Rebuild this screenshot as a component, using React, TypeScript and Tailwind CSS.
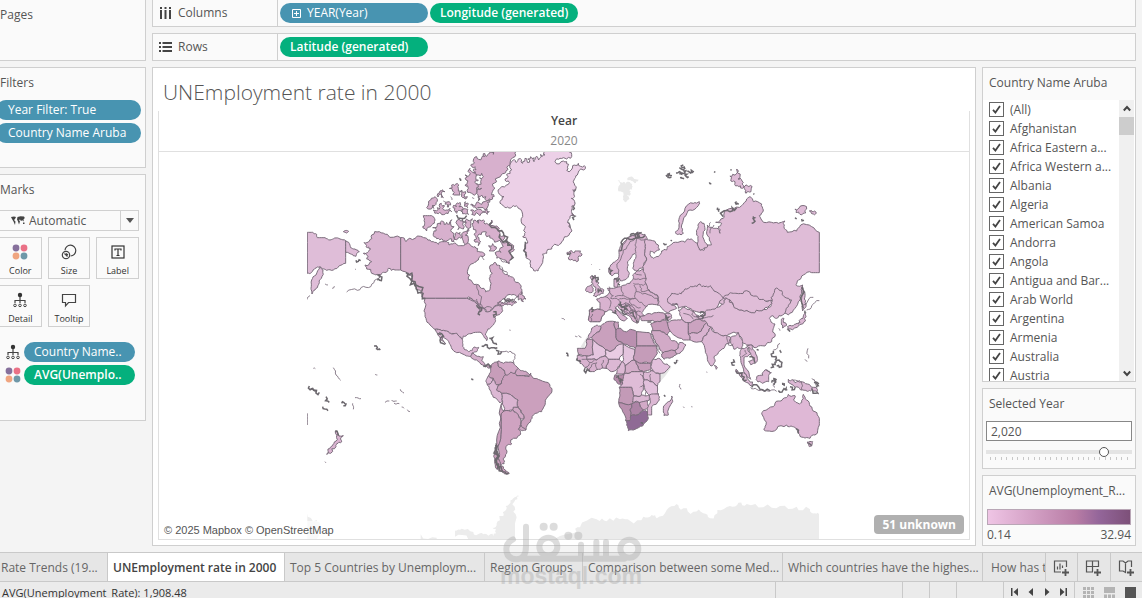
import React from "react";

const OPEN = "font-['Open_Sans','Noto_Sans',sans-serif]";

/* ------------------------------------------------------------------ */
/* Map geometry                                                        */
/* ------------------------------------------------------------------ */

type Land = { f: string; d: string; r?: number };

function noise(a: number, b: number, c: number) {
  const v = Math.sin(a * 12.9898 + b * 78.233 + c * 37.719) * 43758.5453;
  return v - Math.floor(v) - 0.5;
}

/* Splits each edge and pushes its midpoint sideways, so that coasts look natural.
   The offset depends only on the edge, so neighbouring countries share a border.
   Exactly horizontal or vertical edges are surveyed borders and stay straight. */
function roughen(p: number[][], depth: number, amount: number): number[][] {
  if (depth === 0) return p;
  const out: number[][] = [p[0]];
  for (let i = 1; i < p.length; i++) {
    const a = p[i - 1];
    const b = p[i];
    const flip = a[0] > b[0] || (a[0] === b[0] && a[1] > b[1]);
    const [s, e] = flip ? [b, a] : [a, b];
    const dx = e[0] - s[0];
    const dy = e[1] - s[1];
    const len = Math.hypot(dx, dy);
    const straight = dx === 0 || dy === 0 || len <= 6;
    const k = straight ? 0 : (noise(s[0] + e[0], s[1] + e[1], depth) * amount * Math.min(len, 22)) / len;
    out.push([(s[0] + e[0]) / 2 - dy * k, (s[1] + e[1]) / 2 + dx * k], b);
  }
  return roughen(out, depth - 1, amount);
}

function toPath(s: string, closed: boolean, amount: number) {
  const pts = s.trim().split(/\s+/).map((q) => q.split(",").map(Number));
  if (closed) pts.push(pts[0]);
  return (
    roughen(pts, 2, amount)
      .map((q, i) => (i ? "L" : "M") + q[0].toFixed(1) + "," + q[1].toFixed(1))
      .join("") + (closed ? "Z" : "")
  );
}

const west: Land[] = [
  { f: "#dfbdd8", d: "22,262 38,262 50,268 52,278 75,278 90,285 104,279 120,282 137,287 137,355 118,362 100,375 80,376 68,372 60,365 45,370 35,382 22,385" },
  { f: "#dfbdd8", d: "60,366 69,375 64,400 56,418 45,435 36,447 33,430 35,405 48,390" },
  { f: "#dfbdd8", d: "137,287 150,300 152,308 165,312 178,320 170,326 168,334 155,328 137,322" },
  { f: "#dfbdd8", d: "130,260 138,256 146,259 140,264" },
  { f: "#dab6d2", d: "190,325 205,320 212,312 198,305 192,293 208,288 215,270 238,260 262,268 302,278 302,375 285,375 265,370 258,382 245,385 240,397 232,388 215,385 200,372 195,360 215,350 200,342 205,335", r: 0.7 },
  { f: "#d7b0cd", d: "302,278 318,290 345,280 362,274 380,280 400,290 415,298 425,290 440,290 447,300 460,296 475,302 490,302 500,294 510,298 525,305 532,320 548,322 555,330 535,345 520,355 502,380 505,403 530,418 552,430 557,441 566,438 572,420 568,400 577,385 570,362 585,352 600,362 608,378 622,388 632,395 648,412 662,430 665,445 650,455 635,450 620,452 605,465 592,474 605,472 618,474 620,478 600,480 580,490 557,500 548,488 535,480 520,468 500,460 375,460 362,445 350,432 340,412 325,390 302,375", r: 0.6 },
  { f: "#d9b5d1", d: "375,460 500,460 520,468 535,480 548,488 557,500 580,490 600,480 608,497 598,509 585,517 586,530 580,540 572,548 560,560 556,567 562,578 560,587 553,578 546,565 520,563 505,567 490,573 487,583 470,565 455,567 445,560 425,557 405,553 390,540 378,520 372,498", r: 0.4 },
  { f: "#dcb8d4", d: "405,553 425,557 445,560 455,567 470,565 487,583 488,595 492,612 506,620 517,616 522,606 536,607 530,620 516,624 512,634 500,633 470,623 456,612 448,595 435,580 425,566 418,562 428,578 437,596 424,586 414,570" },
  { f: "#d6b0cc", d: "512,634 518,624 532,634 550,635 545,647 555,660 575,663 568,670 548,660 530,645" },
  { f: "#c79dba", d: "572,665 580,655 595,648 598,667 612,675 617,690 608,700 605,715 590,720 580,700 565,693 572,680" },
  { f: "#d2a9c6", d: "595,648 610,655 640,653 655,670 645,685 632,682 625,692 617,690 612,675 598,667" },
  { f: "#cfa5c2", d: "655,670 668,677 685,685 692,695 670,692 650,692 645,685" },
  { f: "#dcb8d4", d: "565,693 580,700 575,712 562,720 558,707" },
  { f: "#dcb8d4", d: "562,720 575,712 580,700 590,720 605,715 590,735 605,745 608,770 600,774 580,757 570,735" },
  { f: "#cba0bd", d: "608,700 617,690 632,682 645,685 650,692 670,692 688,694 692,684 700,700 720,705 750,720 756,733 740,760 732,785 725,800 700,810 692,830 678,855 662,838 672,820 665,805 655,787 654,765 635,752 620,745 605,745 590,735 605,715", r: 0.4 },
  { f: "#dab4d1", d: "605,745 620,745 635,752 654,765 655,787 640,787 638,795 612,798 608,770" },
  { f: "#d2a9c6", d: "640,787 655,787 665,805 672,820 662,822 650,805 638,795" },
  { f: "#cda6c1", d: "662,838 678,855 668,857 655,853" },
  { f: "#cfa3c1", d: "612,798 638,795 650,805 662,822 662,838 655,853 662,867 650,880 632,885 635,897 622,900 620,925 610,940 612,957 600,960 595,940 598,895 603,840", r: 0.5 },
  { f: "#cfa3c1", d: "605,775 612,798 603,840 598,895 594,940 600,960 615,975 628,985 615,987 598,977 586,960 584,925 590,885 598,835", r: 0.5 },
  { f: "#ecd0e7", d: "640,45 650,52 655,42 668,55 675,40 688,52 692,35 702,50 708,35 716,45 722,28 735,30 730,15 812,12 815,28 800,42 780,40 765,50 790,48 806,58 800,76 818,62 835,55 853,62 850,75 832,90 822,105 828,125 818,135 822,150 814,160 825,175 815,195 822,210 805,225 812,250 800,275 785,290 770,300 755,312 740,325 728,327 724,360 714,378 700,372 690,355 680,330 675,300 680,285 668,275 676,262 672,240 668,215 655,190 640,182 622,186 610,183 600,170 612,155 595,142 600,130 625,118 615,105 625,95 620,88 635,75", r: 0.8 },
  { f: "#d7b0cd", d: "530,35 545,38 550,26 562,32 570,20 580,28 600,15 640,18 645,35 630,60 618,78 604,90 590,110 585,130 575,150 578,162 560,168 545,150 535,168 530,145 545,130 525,120 542,110 550,95 535,90 520,85 528,75 525,65 512,60 520,50", r: 1.1 },
  { f: "#d7b0cd", d: "510,70 518,82 530,88 535,105 525,112 530,128 515,145 505,130 495,120 498,105 495,90", r: 1 },
  { f: "#d7b0cd", d: "512,180 530,172 545,178 570,165 565,181 540,188 520,186", r: 1 },
  { f: "#d7b0cd", d: "512,195 535,192 560,190 568,200 562,208 540,212 515,208", r: 0.9 },
  { f: "#d7b0cd", d: "455,120 463,122 466,118 475,130 480,150 468,150 458,138", r: 1 },
  { f: "#d7b0cd", d: "485,135 497,140 502,155 495,162 485,150", r: 1 },
  { f: "#d7b0cd", d: "420,138 435,140 430,158 424,150 414,156", r: 1 },
  { f: "#d7b0cd", d: "392,165 410,160 408,178 402,190 398,180 394,192 380,188", r: 1 },
  { f: "#d7b0cd", d: "400,195 412,188 418,192 424,175 432,180 428,190 436,196 450,190 455,200 438,204 430,209 415,206", r: 1 },
  { f: "#d7b0cd", d: "462,180 470,184 472,174 480,172 490,190 486,200 476,196 470,205 463,196", r: 1 },
  { f: "#d7b0cd", d: "496,170 505,176 503,188 494,184", r: 1 },
  { f: "#d7b0cd", d: "492,192 504,194 506,208 494,206", r: 1 },
  { f: "#d7b0cd", d: "436,178 448,170 452,180 444,187", r: 1 },
  { f: "#d7b0cd", d: "370,212 395,212 405,225 395,240 380,258 368,245 374,232", r: 0.5 },
  { f: "#d7b0cd", d: "398,248 412,236 425,228 432,238 440,232 448,238 455,224 462,245 456,262 470,280 462,290 445,286 430,290 415,280 400,272 408,258", r: 0.9 },
  { f: "#d7b0cd", d: "472,225 488,220 498,232 490,252 480,248 474,254", r: 1 },
  { f: "#d7b0cd", d: "500,222 517,221 512,240 502,260 498,245", r: 1 },
  { f: "#d7b0cd", d: "489,262 500,258 505,280 497,298 488,284", r: 1 },
  { f: "#d7b0cd", d: "466,265 480,262 482,280 470,284", r: 1 },
  { f: "#d7b0cd", d: "525,225 535,235 550,225 560,235 575,225 580,242 598,250 600,265 615,272 622,292 640,310 630,322 635,335 628,355 615,345 600,340 588,330 603,322 600,310 590,290 575,280 560,275 545,262 532,275 542,290 535,302 522,285 528,262 518,242", r: 1.1 },
  { f: "#d7b0cd", d: "566,302 578,296 588,305 582,318 568,318", r: 0.9 },
  { f: "#d7b0cd", d: "655,450 664,440 668,452 678,462 670,470 655,465", r: 1 },
  { f: "#d7b0cd", d: "618,468 630,462 650,472 640,478 622,480", r: 1 },
  { f: "#dab4d1", d: "106,858 112,862 118,874 130,872 124,886 114,895 108,905 92,925 80,928 84,912 98,900 112,884", r: 0.7 },
];

const westThin = [
  "240,397 222,413 198,427 172,436 140,441", "530,420 545,455 540,500", "505,462 530,470 548,492 575,488",
  "545,498 535,478 530,462", "620,460 640,470 655,455", "22,805 22,840", "600,485 615,470 630,462", "100,668 108,690 122,706", "105,425 98,432",
  "225,688 232,690", "40,670 46,671", "165,758 183,761", "158,775 160,793", "628,555 632,556", "640,625 645,640 642,655", "600,620 625,622 640,625",
  "165,372 168,374", "75,417 84,420", "255,772 268,768", "275,765 290,768", "282,774 298,776", "305,786 312,790", "322,794 330,800", "301,733 312,744", "75,950 78,954",
  "22,463 30,452", "605,365 612,378 622,386", "545,335 552,345", "430,168 438,172", "452,155 456,165", "516,158 522,162", "600,340 615,350 628,356",
];
const westDark = [
  "318,383 335,402 348,425 362,442 376,460", "325,383 345,410 365,440", "232,390 245,402 232,406", "412,565 422,578 436,598",
  "545,603 562,600 580,608 592,610", "588,616 605,620", "568,580 578,588 590,600", "550,665 560,660 575,665", "28,723 42,735 58,742", "32,732 50,738",
  "78,755 88,772", "68,785 84,797", "125,775 138,777 130,782", "106,858 116,872", "222,603 232,607 241,615", "514,701 520,704",
  "587,900 585,945 598,972", "590,925 594,960 606,978", "596,955 606,975 626,985", "588,895 592,905 588,915 594,930",
  "600,268 618,285 636,312 630,345", "575,232 590,250 612,272 630,300", "530,480 545,495 540,510", "612,460 628,470 640,462", "676,290 676,310 680,335", "580,500 583,518", "478,100 482,108", "470,210 500,212", "168,346 182,347",
];

const north: Land[] = [
  { f: "#dcb8d4", d: "50,325 60,318 68,322 75,318 92,318 96,330 85,342 70,347 55,338 60,330", r: 0.9 },
  { f: "#dcb8d4", d: "125,392 135,390 137,402 146,412 148,425 158,432 160,445 145,450 130,452 138,440 132,425 124,412", r: 0.8 },
  { f: "#d8b2cf", d: "112,425 125,418 130,430 122,443 110,440", r: 0.6 },
  { f: "#dcb8d4", d: "176,370 190,352 202,345 207,322 214,300 240,275 265,262 285,268 292,282 286,300 285,320 290,345 280,368 260,378 248,370 250,355 258,335 255,325 245,335 233,350 232,370 238,385 225,405 212,408 205,385 195,385 185,392 176,382", r: 0.4 },
  { f: "#dcb8d4", d: "192,402 204,398 208,412 204,426 192,425" },
  { f: "#d9b3d0", d: "140,462 165,455 180,440 172,430 190,430 212,425 240,415 250,400 248,390 258,380 280,372 290,400 300,440 322,450 325,480 300,478 285,490 276,502 285,512 272,515 262,535 252,530 240,515 225,505 215,495 203,482 195,490 215,508 232,520 222,528 200,508 185,495 165,500 155,515 150,530 120,530 115,525 118,495 150,492 150,472" },
  { f: "#cfa6c3", d: "118,495 150,494 165,500 155,515 150,530 120,530 115,525" },
  { f: "#dfbcd7", d: "285,282 300,285 325,300 328,315 312,325 302,318 300,330 310,340 325,335 335,318 350,315 352,305 365,298 390,290 405,292 415,282 430,287 445,300 448,314 462,316 470,300 484,300 478,285 470,260 472,240 490,250 500,250 510,265 505,245 515,235 497,232 520,220 522,207 545,190 575,182 590,162 600,155 610,170 635,177 640,195 628,212 635,225 665,232 685,235 705,228 702,245 712,262 740,258 752,240 785,245 808,262 808,383 785,383 760,390 745,405 738,418 748,424 758,420 755,445 750,465 735,490 715,510 695,505 725,465 640,470 520,480 480,460 365,480 380,490 355,505 340,495 322,480 325,465 322,450 300,440 290,420 288,400 280,372 290,345 285,320 286,300", r: 0.45 },
  { f: "#dfbcd7", d: "375,262 387,240 388,218 405,190 430,175 448,170 445,182 420,195 408,212 395,240 400,265 385,268", r: 0.5 },
  { f: "#dfbcd7", d: "445,245 452,230 462,235 460,260 464,290 470,308 452,315 444,290 440,270", r: 0.5 },
  { f: "#dfbcd7", d: "548,88 560,72 570,95 564,102 580,112 577,130 562,122 555,110 543,103", r: 0.9 },
  { f: "#dfbcd7", d: "583,130 592,122 604,130 603,140 588,145", r: 0.9 },
  { f: "#dfbcd7", d: "735,192 750,184 770,192 768,203 750,208 738,202", r: 0.9 },
  { f: "#dfbcd7", d: "778,198 790,200 798,201 790,207", r: 0.9 },
  { f: "#e0bdd8", d: "353,460 365,445 385,448 400,440 415,430 430,425 450,417 465,425 480,422 492,438 520,460 505,480 490,500 470,505 440,500 420,490 400,485 385,490 378,475 365,480", r: 0.6 },
  { f: "#dfbcd7", d: "757,425 764,440 763,462 768,485 758,498 755,460", r: 0.5 },
];

const northThin = [
  "205,385 208,350 220,315 240,290 262,280 285,285", "262,280 255,300 258,325", "178,425 180,445 190,452 182,460", "215,425 218,452", "252,420 258,440 255,458 238,460 215,452 195,455",
  "250,400 270,404 290,401", "250,415 270,420 288,416", "270,422 275,440 300,438", "255,460 275,472 292,484", "182,460 205,465 225,460 240,462 255,460", "240,462 245,480 272,488",
  "165,455 182,468 178,490", "128,507 125,528", "205,465 210,478 225,475 240,480", "225,475 228,495 240,500", "240,480 250,500 262,505", "770,495 785,482 808,467", "148,372 150,375",
  "258,440 285,445 325,460", "124,358 126,360", "255,385 275,390", "228,505 245,495 272,500", "195,485 222,507", "222,500 250,515 262,530", "215,300 240,274 262,263", "475,245 482,232", "480,265 492,240",
];
const northDark = [
  "215,300 232,280 255,268 275,262", "208,318 218,296", "240,272 262,264 285,272", "178,368 182,388", "348,90 358,86 366,92", "352,98 364,96", "378,84 388,80 396,84", "388,68 398,74 405,70",
  "395,90 410,88 416,95", "400,60 405,72", "412,78 424,76 432,80", "390,98 402,102", "420,85 430,82", "400,74 406,86", "492,80 496,82", "478,112 484,116", "541,74 545,75",
  "560,170 566,178", "503,188 507,200", "520,215 540,200 560,188", "340,295 350,298", "362,285 366,288",
  "735,218 740,222", "755,222 762,226", "610,146 613,148", "605,235 612,225 608,215", "125,392 138,398 142,412", "192,402 208,400", "204,415 210,420",
  "68,150 75,175 68,195", "66,205 72,225", "40,235 52,245 45,270 32,265", "55,232 50,262", "64,120 72,140", "145,430 156,440", "60,322 52,330", "756,425 760,490", "240,505 256,522", "212,492 230,508",
];

const south: Land[] = [
  { f: "#d2aac7", d: "238,50 260,42 290,38 315,42 318,58 300,65 270,62 245,62" },
  { f: "#dcb8d4", d: "315,42 330,40 335,52 325,62 318,58" },
  { f: "#c69cba", d: "272,72 300,65 318,60 322,70 330,92 322,105 300,92 278,92" },
  { f: "#d6afcc", d: "322,66 345,60 365,58 385,68 385,100 390,120 370,120 345,107 330,92" },
  { f: "#dfbcd7", d: "355,30 370,22 390,28 410,45 430,62 410,58 385,68 365,58 360,45" },
  { f: "#cba3c0", d: "385,68 410,58 445,68 430,82 412,100 390,102 385,100" },
  { f: "#d9b3d0", d: "385,100 390,102 412,100 430,82 445,68 452,82 440,105 425,125 395,122 390,120" },
  { f: "#e0bdd8", d: "408,48 430,42 445,30 470,22 490,12 492,0 505,-8 520,15 545,30 575,38 605,32 632,20 636,5 640,-18 650,-36 665,-28 675,-8 692,5 685,20 668,45 650,55 640,48 628,55 632,62 645,72 640,85 646,105 635,125 615,138 590,142 575,135 560,135 545,125 540,108 535,98 510,102 490,108 460,98 450,80 440,68 425,62", r: 0.5 },
  { f: "#e0bdd8", d: "490,-5 505,-15 520,-20 535,-19 560,-28 590,-12 610,-2 635,0 628,18 605,32 575,38 545,30 520,15 505,-2", r: 0.6 },
  { f: "#dcb8d4", d: "440,105 452,82 465,98 490,108 512,112 510,128 498,132 492,145 475,158 462,170 463,188 453,198 442,178 436,150 425,125" },
  { f: "#dcb8d4", d: "463,196 472,203 468,208" },
  { f: "#dcb8d4", d: "512,112 522,108 535,98 548,125 545,145 532,142 522,148 512,130" },
  { f: "#dcb8d4", d: "545,145 560,142 572,160 562,170 552,172 552,195 568,225 572,238 560,228 548,200 542,175 540,158" },
  { f: "#dcb8d4", d: "560,138 575,135 580,150 592,175 588,188 572,194 566,184 580,178 572,160" },
  { f: "#e0bdd8", d: "528,208 545,218 560,230 578,246 574,258 555,245 540,228", r: 0.6 },
  { f: "#dcb8d4", d: "590,230 608,226 622,210 634,218 626,230 626,245 608,250 594,246", r: 0.6 },
  { f: "#dcb8d4", d: "685,238 700,240 708,248 722,245 742,252 760,262 776,282 755,270 742,274 722,270 705,262", r: 0.6 },
  { f: "#dcb8d4", d: "664,58 672,55 680,75 668,84 664,72", r: 0.6 },
  { f: "#dcb8d4", d: "682,88 690,76 708,72 720,68 730,48 735,40 738,50 728,72 712,82", r: 0.8 },
  { f: "#dfb8d6", d: "607,345 610,332 640,320 655,303 668,297 685,283 705,287 700,300 718,312 725,308 730,283 740,300 750,318 765,335 778,355 778,375 765,405 750,415 730,412 715,400 708,386 698,380 680,375 650,388 620,393 612,390 618,375", r: 0.5 },
  { f: "#dfb8d6", d: "742,426 758,425 755,438 748,440" },
  { f: "#d2aac7", d: "275,92 300,92 322,105 335,122 350,125 355,140 345,152 310,162 300,150 285,120" },
  { f: "#c79ebb", d: "305,162 345,152 350,162 335,172 312,178" },
  { f: "#dcb8d4", d: "345,152 355,140 358,128 378,135 368,152 350,162" },
  { f: "#d8b2cf", d: "85,108 95,85 110,75 122,78 118,95 98,108 95,113 82,116" },
  { f: "#cfa8c4", d: "52,145 75,145 80,118 98,118 100,165 80,168 55,164" },
  { f: "#c9a0bd", d: "122,78 135,68 165,65 168,90 168,112 190,132 150,155 138,150 98,118 95,113 98,108 118,95" },
  { f: "#c9a0bd", d: "165,65 175,66 176,82 168,90" },
  { f: "#ba90b0", d: "168,90 180,84 200,96 212,88 230,95 230,148 190,132 168,112" },
  { f: "#cda6c2", d: "230,95 268,98 278,118 290,138 230,138" },
  { f: "#e5c5df", d: "98,118 138,150 135,168 110,180 80,178 80,168 100,165" },
  { f: "#e9cce3", d: "138,150 150,155 175,135 190,132 190,160 178,178 145,178 135,168" },
  { f: "#e4c4de", d: "190,132 225,148 222,180 195,198 188,185 190,160" },
  { f: "#c59cb9", d: "230,138 290,138 292,160 275,188 245,190 222,180 225,148" },
  { f: "#e2c0dc", d: "280,178 295,175 310,190 330,200 305,220 280,218 272,200" },
  { f: "#c79ebb", d: "222,180 245,190 272,190 272,200 275,212 250,215 235,205" },
  { f: "#d4adc9", d: "195,198 222,180 235,205 250,215 215,215 192,222" },
  { f: "#dcb8d4", d: "145,178 178,178 188,185 180,195 170,208 155,215 138,205" },
  { f: "#dcb8d4", d: "170,208 188,185 195,198 192,222 168,222" },
  { f: "#d8b2cf", d: "52,166 80,168 80,178 110,180 135,168 145,178 138,205 115,208 90,215 75,203 60,190 52,178" },
  { f: "#b58baa", d: "165,224 192,222 198,235 188,255 175,252 163,240" },
  { f: "#dfbcd7", d: "192,222 215,215 248,215 255,235 250,270 245,285 222,288 215,262 178,262 188,252" },
  { f: "#dcb8d4", d: "250,218 275,212 300,222 300,245 292,258 270,245 252,240" },
  { f: "#e2c0dc", d: "252,240 270,245 292,258 295,282 270,287 255,270" },
  { f: "#c39ab7", d: "178,262 215,262 222,288 215,312 176,308 180,285" },
  { f: "#dcb8d4", d: "222,288 245,285 258,288 268,285 268,300 240,308 217,306" },
  { f: "#dcb8d4", d: "268,285 295,282 298,300 275,320 275,345 262,345 262,320 270,300" },
  { f: "#d2aac7", d: "238,308 262,302 265,320 250,330" },
  { f: "#b98fae", d: "176,308 215,312 212,348 210,362 197,362 188,335" },
  { f: "#ad84a6", d: "215,312 238,308 250,330 232,345 212,348" },
  { f: "#8f6a95", d: "197,362 210,362 212,348 232,345 250,332 262,335 265,355 248,378 225,388 205,392 200,375" },
  { f: "#dcb8d4", d: "335,288 338,305 325,345 312,347 310,325 325,305", r: 0.5 },
];

const southThin = [
  "65,178 80,178 90,188 110,180", "90,215 95,195 110,188 112,208", "128,205 130,180", "75,203 88,190", "700,240 724,246 726,270", "240,222 252,240", "258,288 255,270",
  "250,255 240,262", "272,222 275,245", "420,48 440,52 460,45", "400,30 395,42 430,55", "370,40 400,58", "545,170 560,160 555,150", "575,150 565,142", "500,110 505,135 520,132",
  "744,145 746,175", "735,178 742,184", "618,210 630,215", "5,55 15,60", "350,180 355,182", "360,252 363,268", "395,318 396,322", "370,320 373,324", "725,20 745,0 760,-8",
  "440,215 441,218", "780,3 784,5", "272,100 282,125 300,160", "572,262 590,268 620,272 650,274", "195,8 215,28 232,60", "205,10 225,30 240,48", "45,108 52,110", "56,106 64,112",
  "660,130 640,150", "640,250 645,262", "756,235 768,246", "656,85 660,92",
];
const southDark = [
  "575,262 600,268 630,272", "655,272 672,266 682,270", "635,248 640,235 650,240", "640,238 642,255", "668,248 672,258", "690,260 705,262", "640,152 643,170 650,182",
  "648,188 660,184 658,202 650,198", "645,185 632,203", "762,248 775,250 770,262", "755,265 775,278", "660,150 664,158", "520,178 524,196", "530,212 545,228 560,240",
  "98,22 94,35", "175,12 190,20 203,30", "165,30 168,42", "182,5 205,18", "230,60 236,66", "262,66 274,66", "350,180 342,187", "168,232 186,240 180,250", "52,175 62,186", "75,205 90,214",
  "18,160 26,168", "312,285 316,290", "708,386 716,400", "745,428 755,436", "420,40 435,45 425,58", "735,32 738,40", "683,88 690,95", "590,148 596,150", "568,170 585,188", "318,45 325,62", "242,368 248,372",
];

const antarctica = [
  "-35,178 -75,170 -75,152 -55,146 -20,156 0,160 20,163 40,168 48,148 36,140 50,130 58,108 70,108 78,90 88,72 100,55 118,48 103,65 100,95 105,130 105,178",
  "210,178 250,165 280,160 300,142 350,118 380,124 420,118 450,122 490,110 515,105 530,115 560,90 590,72 610,85 640,95 670,100 690,115 712,90 750,78 775,68 800,72 850,82 900,78 950,80 990,88 1005,100 1017,103 1017,178",
  "-518,100 -490,120 -478,135 -490,178 -518,178",
  "-178,163 -130,173 -120,178 -178,178",
];
const svalbard = [
  "200,105 212,112 222,110 228,118 240,112 248,125 238,135 242,145 230,150 228,172 220,160 214,140 204,132",
  "232,100 250,98 266,104 258,114 245,108",
];

function Region({ lands, thin, dark }: { lands: Land[]; thin: string[]; dark: string[] }) {
  return (
    <>
      {lands.map((l, i) => (
        <path key={i} d={toPath(l.d, true, l.r ?? 0.35)} fill={l.f} stroke="#7a6c7b" strokeWidth={3} strokeLinejoin="round" />
      ))}
      {thin.map((d, i) => (
        <path key={i} d={toPath(d, false, 0.5)} fill="none" stroke="#7a6c7b" strokeWidth={2.6} />
      ))}
      {dark.map((d, i) => (
        <path key={i} d={toPath(d, false, 1.2)} fill="none" stroke="#6c686e" strokeWidth={4.5} />
      ))}
    </>
  );
}

function WorldMap() {
  return (
    <svg className="block h-full w-full" viewBox="159 152 810 387" role="img" aria-label="Unemployment by country">
      <defs>
        <clipPath id="world">
          <rect x="307" y="152" width="513" height="388" />
        </clipPath>
      </defs>
      <g clipPath="url(#world)">
        <g transform="translate(480,480) scale(.33333)" fill="#ececec">
          {antarctica.map((d, i) => (
            <path key={i} d={toPath(d, true, 0.9)} />
          ))}
        </g>
        <g transform="translate(550,145) scale(.33333)" fill="#e9e9e9">
          {svalbard.map((d, i) => (
            <path key={i} d={toPath(d, true, 1)} />
          ))}
        </g>
        <g transform="translate(560,300) scale(.33333)" fill="#e6e6e6">
          <path d="M62,140L82,108L80,118L72,145ZM330,195L334,202L318,225L300,246L300,222Z" />
        </g>
        <g transform="translate(550,145) scale(.33333)">
          <Region lands={north} thin={northThin} dark={northDark} />
        </g>
        <g transform="translate(560,300) scale(.33333)">
          <Region lands={south} thin={southThin} dark={southDark} />
        </g>
        <g transform="translate(300,145) scale(.33333)">
          <Region lands={west} thin={westThin} dark={westDark} />
        </g>
      </g>
    </svg>
  );
}

/* ------------------------------------------------------------------ */
/* Icons                                                               */
/* ------------------------------------------------------------------ */

const ColorDots = () => (
  <svg width="16" height="16" viewBox="0 0 16 16">
    <circle cx="4" cy="4" r="3.4" fill="#86709c" />
    <circle cx="12" cy="4" r="3.4" fill="#ea7186" />
    <circle cx="4" cy="12" r="3.4" fill="#f0a580" />
    <circle cx="12" cy="12" r="3.4" fill="#6f98a8" />
  </svg>
);
const DetailIcon = () => (
  <svg width="16" height="16" viewBox="0 0 16 16" fill="none" stroke="#444">
    <circle cx="8" cy="3" r="2.2" fill="#333" stroke="none" />
    <path d="M8 5v6M3 11V8.5h10V11" strokeWidth="1.2" />
    <circle cx="3" cy="13.4" r="1.3" />
    <circle cx="8" cy="13.4" r="1.3" />
    <circle cx="13" cy="13.4" r="1.3" />
  </svg>
);
const SizeIcon = () => (
  <svg width="16" height="16" viewBox="0 0 16 16" fill="none" stroke="#444" strokeWidth="1.2">
    <path d="M4 6.2A5.4 5.4 0 1 1 9.6 12" />
    <circle cx="5" cy="11" r="3.7" />
    <path d="M3.5 9.5l3 3M5 9.5l2 1.5" />
  </svg>
);
const LabelIcon = () => (
  <svg width="16" height="16" viewBox="0 0 16 16" fill="none" stroke="#333" strokeWidth="1.2">
    <rect x="2" y="2" width="12" height="12" />
    <path d="M5 6.5V5h6v1.500M8 5v6.500M6.500 11.500h3" />
  </svg>
);
const TooltipIcon = () => (
  <svg width="16" height="16" viewBox="0 0 16 16" fill="none" stroke="#444" strokeWidth="1.2">
    <path d="M1.500 2.500h13v8H7.500L4.500 14v-3.500h-3z" />
  </svg>
);
const MapGlyph = () => (
  <svg width="14" height="10" viewBox="0 0 14 10" fill="#444">
    <path d="M0 1l3-.5 2 .5-1 2-1 1 1.500 1.500L4 9 2.500 5.500 1 3zM6.500 1l3-.8L13 .6l.8 1.400-1.300 1.500.3 2-1.500-1.300L10 5 9 3.500 8 4l1 1.500L8 8.500 6.800 5 6 3.500zM12 6.500h1.500V8H12z" />
  </svg>
);
const PlusMark = () => <path d="M12.500 10v7M9 13.500h7" strokeWidth="1.800" />;
const NewSheet = () => (
  <svg width="17" height="17" viewBox="0 0 17 17" fill="none" stroke="#555" strokeWidth="1.200">
    <path d="M13.500 8V2h-12v11H8M4.500 10.500v-3M7 10.500v-6M9.500 9V6.500" />
    <PlusMark />
  </svg>
);
const NewDashboard = () => (
  <svg width="17" height="17" viewBox="0 0 17 17" fill="none" stroke="#555" strokeWidth="1.200">
    <path d="M13.500 8V2h-12v11H8M7.500 2v11M1.500 7.500h12" />
    <PlusMark />
  </svg>
);
const NewStory = () => (
  <svg width="17" height="17" viewBox="0 0 17 17" fill="none" stroke="#555" strokeWidth="1.200">
    <path d="M13.500 8V2h-3.500L7.500 4 5 2H1.500v10H5l2.500 1.500V4" />
    <PlusMark />
  </svg>
);

/* ------------------------------------------------------------------ */
/* Controls                                                            */
/* ------------------------------------------------------------------ */

function Pill({ children, green, className = "" }: { children: React.ReactNode; green?: boolean; className?: string }) {
  return (
    <button
      type="button"
      className={`flex h-5 shrink-0 items-center whitespace-nowrap rounded-full text-[12px] text-white ${green ? "bg-[#04b07d] font-semibold" : "bg-[#4894b1] font-medium"} ${className}`}
    >
      {children}
    </button>
  );
}

function MarkButton({ icon, label }: { icon: React.ReactNode; label: string }) {
  return (
    <button type="button" className="flex h-[42px] flex-col items-center justify-between border border-[#d0d0d0] pb-px pt-1.5 text-[9px] leading-3 text-[#333]">
      {icon}
      {label}
    </button>
  );
}

const countries = [
  "(All)", "Afghanistan", "Africa Eastern a...", "Africa Western a...", "Albania", "Algeria", "American Samoa", "Andorra",
  "Angola", "Antigua and Bar...", "Arab World", "Argentina", "Armenia", "Australia", "Austria",
];

function LeftPane() {
  return (
    <aside className="flex w-[146px] shrink-0 flex-col gap-1.5">
      <section className="h-[61px] border-b border-r border-[#cfcfcf] bg-[#fafafa]">
        <h2 className="pt-1.5 text-[12px] leading-[18px]">Pages</h2>
      </section>
      <section className="h-[101px] border-y border-r border-[#cfcfcf] bg-[#fafafa]">
        <h2 className="pt-1.5 text-[12px] leading-[18px]">Filters</h2>
        <div className="mr-1 mt-2 flex flex-col gap-[3px]">
          <Pill className="-ml-1 pl-3">Year Filter: True</Pill>
          <Pill className="-ml-1 pl-3">Country Name Aruba</Pill>
        </div>
      </section>
      <section className="h-[247px] border-y border-r border-[#cfcfcf] bg-[#fafafa]">
        <h2 className="pt-1.5 text-[12px] leading-[18px]">Marks</h2>
        <div className="relative mr-1.5 mt-[11px] flex h-[21px] items-center border-y border-r border-[#d0d0d0] pl-[11px]">
          <MapGlyph />
          <select aria-label="Mark type" className="h-full flex-1 appearance-none bg-transparent pl-1 text-[12px] text-[#555] outline-none">
            <option>Automatic</option>
          </select>
          <span className="pointer-events-none flex h-full w-[18px] items-center justify-center border-l border-[#d0d0d0]">
            <svg width="8" height="5" viewBox="0 0 8 5" fill="#555">
              <path d="M0 0h8L4 5z" />
            </svg>
          </span>
        </div>
        <div className="-ml-px mr-1.5 mt-1.5 grid grid-cols-3 gap-1.5">
          <MarkButton icon={<ColorDots />} label="Color" />
          <MarkButton icon={<SizeIcon />} label="Size" />
          <MarkButton icon={<LabelIcon />} label="Label" />
          <MarkButton icon={<DetailIcon />} label="Detail" />
          <MarkButton icon={<TooltipIcon />} label="Tooltip" />
        </div>
        <div className="mr-2.5 mt-[15px] flex flex-col gap-[3px] pl-[5px]">
          <div className="flex items-center gap-[3px]">
            <DetailIcon />
            <Pill className="flex-1 pl-2.5">Country Name..</Pill>
          </div>
          <div className="flex items-center gap-[3px]">
            <ColorDots />
            <Pill green className="flex-1 pl-2.5">AVG(Unemplo..</Pill>
          </div>
        </div>
      </section>
    </aside>
  );
}

function Shelf({ icon, name, first, children }: { icon: React.ReactNode; name: string; first?: boolean; children: React.ReactNode }) {
  return (
    <div className={`flex items-stretch border-x border-b border-[#cfcfcf] bg-[#fafafa] ${first ? "h-[27px]" : "h-7 border-t"}`}>
      <div className="flex w-[125px] items-center gap-1.5 border-r border-[#cfcfcf] pl-1.5 text-[12px]">
        {icon}
        {name}
      </div>
      <div className="flex items-center gap-0.5 pl-0.5">{children}</div>
    </div>
  );
}

function RightPane() {
  return (
    <aside className="flex w-[154px] shrink-0 flex-col gap-1.5">
      <section className="flex min-h-0 flex-1 flex-col border border-[#cfcfcf] bg-[#fafafa]">
        <h2 className="pl-1.5 pt-1.5 text-[12px] leading-[18px]">Country Name Aruba</h2>
        <div className="mt-2 flex min-h-0 flex-1 bg-white">
          <ul className="min-w-0 flex-1 overflow-hidden pl-1.5">
            {countries.map((c) => (
              <li key={c}>
                <label className="flex h-[19px] items-center gap-1.5 whitespace-nowrap text-[12px] text-[#555]">
                  <span className="relative block size-[15px] shrink-0">
                    <input type="checkbox" defaultChecked className="peer block size-[15px] appearance-none border border-[#666] bg-white" />
                    <svg className="pointer-events-none absolute inset-0 hidden peer-checked:block" width="15" height="15" viewBox="0 0 15 15" fill="none" stroke="#444" strokeWidth="1.800">
                      <path d="M4 7.800l2.400 2.700L11 4" />
                    </svg>
                  </span>
                  {c}
                </label>
              </li>
            ))}
          </ul>
          <div className="mr-px flex w-[15px] shrink-0 flex-col items-center bg-[#f0f0f0]">
            <svg className="my-[5px]" width="8" height="7" viewBox="0 0 8 7" fill="none" stroke="#444" strokeWidth="2">
              <path d="M.8 5.500L4 2l3.200 3.500" />
            </svg>
            <span className="h-[18px] w-full bg-[#cdcdcd]" />
            <svg className="mb-1 mt-auto" width="8" height="7" viewBox="0 0 8 7" fill="none" stroke="#444" strokeWidth="2">
              <path d="M.8 1.500L4 5l3.200-3.500" />
            </svg>
          </div>
        </div>
      </section>
      <section className="h-[81px] border border-[#cfcfcf] bg-[#fafafa] px-[3px]">
        <label htmlFor="year" className="block pl-[3px] pt-1.5 text-[12px] leading-[18px]">Selected Year</label>
        <input id="year" defaultValue="2,020" className="mt-2 block h-5 w-full border border-[#888] bg-white px-1 text-[12px] text-[#555] outline-none" />
        <input
          type="range"
          aria-label="Selected year slider"
          min={1996}
          max={2025}
          defaultValue={2020}
          className="mt-1.5 block h-2.5 w-full appearance-none bg-[linear-gradient(#e4e4e4,#e4e4e4)] bg-[length:100%_4px] bg-center bg-no-repeat [&::-webkit-slider-thumb]:size-2.5 [&::-webkit-slider-thumb]:appearance-none [&::-webkit-slider-thumb]:rounded-full [&::-webkit-slider-thumb]:border [&::-webkit-slider-thumb]:border-solid [&::-webkit-slider-thumb]:border-[#555] [&::-webkit-slider-thumb]:bg-white"
        />
        <div className="flex justify-between px-1">
          {Array.from({ length: 26 }, (_, i) => (
            <span key={i} className="h-[3px] w-px bg-[#c8c8c8]" />
          ))}
        </div>
      </section>
      <section className="h-[71px] border border-[#cfcfcf] bg-[#fafafa] px-1">
        <h2 className="whitespace-nowrap pl-0.5 pt-1.5 text-[12px] leading-[18px]">AVG(Unemployment_R...</h2>
        <div className="mt-[9px] h-4 border border-[#b9a6b6] bg-[linear-gradient(90deg,#efc5e5,#b87ca5_62%,#94669a_78%,#7d5079)]" />
        <div className="flex justify-between text-[12px] leading-5 text-[#555]">
          <span>0.14</span>
          <span>32.94</span>
        </div>
      </section>
    </aside>
  );
}

function Tab({ children, className }: { children: React.ReactNode; className: string }) {
  return (
    <button type="button" className={`shrink-0 overflow-hidden whitespace-nowrap border-r border-[#c9c9c9] pt-px text-left text-[12px] ${className}`}>
      {children}
    </button>
  );
}

function NavIcon({ d }: { d: string }) {
  return (
    <button type="button" className="flex w-4 items-center justify-center" aria-label="Change sheet">
      <svg width="8" height="8" viewBox="0 0 8 8" fill="#444">
        <path d={d} />
      </svg>
    </button>
  );
}

function Watermark() {
  return (
    <div className="pointer-events-none absolute bottom-2.5 left-1/2 flex w-40 -translate-x-1/2 flex-col items-center text-[#aaa] opacity-40" aria-hidden="true">
      <svg width="160" height="42" viewBox="0 36 480 126" fill="none" stroke="currentColor" strokeWidth="18" strokeLinecap="round" strokeLinejoin="round">
        <path d="M105 50V108Q105 148 76 148Q46 146 46 118Q46 98 66 88M95 146H400M270 104V146M316 96V146M345 96V146" />
        <circle cx="172" cy="110" r="27" />
        <circle cx="415" cy="116" r="27" />
        <g fill="currentColor" stroke="none">
          <circle cx="158" cy="50" r="12" />
          <circle cx="188" cy="50" r="12" />
          <circle cx="232" cy="77" r="12" />
          <circle cx="262" cy="77" r="12" />
        </g>
      </svg>
      <span className="font-['Liberation_Sans',sans-serif] text-[23px] font-bold leading-6">mostaql.com</span>
    </div>
  );
}

export default function App() {
  return (
    <div className={`relative flex h-screen flex-col overflow-hidden bg-[#f4f4f4] text-[#555] ${OPEN}`}>
      <div className="flex min-h-0 flex-1 gap-1.5 pb-1.5 pr-1.5">
        <LeftPane />
        <main className="flex min-w-0 flex-1 flex-col gap-1.5">
          <Shelf
            first
            name="Columns"
            icon={
              <svg width="13" height="12" viewBox="0 0 13 12" fill="#444">
                <path d="M1 0h2v2H1zM1 3h2v9H1zM5.500 0h2v2h-2zM5.500 3h2v9h-2zM10 0h2v2h-2zM10 3h2v9h-2z" />
              </svg>
            }
          >
            <Pill className="w-[148px] pl-3">
              <svg className="mr-1.5" width="9" height="9" viewBox="0 0 9 9" fill="none" stroke="#fff">
                <path d="M.5.5h8v8h-8zM4.500 2v5M2 4.500h5" />
              </svg>
              YEAR(Year)
            </Pill>
            <Pill green className="w-[148px] pl-2.5">Longitude (generated)</Pill>
          </Shelf>
          <Shelf
            name="Rows"
            icon={
              <svg width="13" height="10" viewBox="0 0 13 10" fill="#444">
                <path d="M0 0h2v2H0zM3.500 0H13v2H3.500zM0 4h2v2H0zM3.500 4H13v2H3.500zM0 8h2v2H0zM3.500 8H13v2H3.500z" />
              </svg>
            }
          >
            <Pill green className="w-[148px] pl-2.5">Latitude (generated)</Pill>
          </Shelf>
          <div className="flex min-h-0 flex-1 gap-1.5">
            <section className="flex min-w-0 flex-1 flex-col border border-[#cfcfcf] bg-white px-[5px] pb-[5px]">
              <h1 className="pb-1 pl-[5px] pt-2.5 text-[21px] font-light leading-[29px] text-[#555]">UNEmployment rate in 2000</h1>
              <div className="flex min-h-0 flex-1 flex-col border-x border-b border-[#e0e0e0]">
                <div className="border-b border-[#e0e0e0] text-center text-[12px] leading-5">
                  <div className="font-semibold text-[#444]">Year</div>
                  <div className="text-[#888]">2020</div>
                </div>
                <div className="relative min-h-0 flex-1">
                  <WorldMap />
                  <p className="absolute bottom-0 left-0 bg-white/70 px-[5px] font-['Liberation_Sans',sans-serif] text-[11px] leading-[18px] text-[#555]">
                    © 2025 Mapbox © OpenStreetMap
                  </p>
                  <button type="button" className="absolute bottom-[5px] right-[5px] h-[19px] rounded-sm bg-[#b0b0b0] px-2 text-[12px] font-bold leading-[18px] text-white">
                    51 unknown
                  </button>
                </div>
              </div>
            </section>
            <RightPane />
          </div>
        </main>
      </div>

      <nav className="flex h-[30px] shrink-0 border-y border-[#c9c9c9] bg-[#e6e6e6] text-[#666]">
        <Tab className="w-[108px] pl-px">Rate Trends (19...</Tab>
        <Tab className="w-[177px] bg-white pl-[5px] font-semibold text-[#444]">UNEmployment rate in 2000</Tab>
        <Tab className="w-[200px] pl-[5px]">Top 5 Countries by Unemploym...</Tab>
        <Tab className="w-[98px] pl-[5px]">Region Groups</Tab>
        <Tab className="w-[200px] pl-[5px]">Comparison between some Med...</Tab>
        <Tab className="w-[200px] pl-[5px]">Which countries have the highes...</Tab>
        <Tab className="w-[63px] pl-2">How has t</Tab>
        <button type="button" aria-label="New worksheet" className="flex flex-1 items-center justify-center border-r border-[#c9c9c9]"><NewSheet /></button>
        <button type="button" aria-label="New dashboard" className="flex flex-1 items-center justify-center border-r border-[#c9c9c9]"><NewDashboard /></button>
        <button type="button" aria-label="New story" className="flex flex-1 items-center justify-center"><NewStory /></button>
      </nav>

      <footer className="flex h-4 shrink-0 overflow-hidden bg-[#ebebeb] text-[11px] text-[#333]">
        <span className="flex-1 whitespace-nowrap pl-0.5 leading-[22px]">AVG(Unemployment_Rate): 1,908.48</span>
        <span className="w-[127px] border-l border-[#c9c9c9]" />
        <span className="w-[27px] border-l border-[#c9c9c9]" />
        <span className="w-[27px] border-l border-[#c9c9c9]" />
        <span className="w-[47px] border-l border-[#c9c9c9]" />
        <div className="flex h-5 w-[71px] border-l border-[#c9c9c9] pl-[3px]">
          <NavIcon d="M0 0h1.500v8H0zM7 0v8L2.500 4z" />
          <NavIcon d="M6 0v8L1.500 4z" />
          <NavIcon d="M2 0v8l4.500-4z" />
          <NavIcon d="M6.500 0H8v8H6.500zM1 0v8l4.500-4z" />
        </div>
        <div className="flex h-5 w-[68px] items-center gap-2.5 border-l border-[#c9c9c9] pl-2">
          <svg width="11" height="11" viewBox="0 0 11 11" fill="#b4b4b4">
            <path d="M0 0h3v3H0zM4 0h3v3H4zM8 0h3v3H8zM0 4h3v3H0zM4 4h3v3H4zM8 4h3v3H8zM0 8h3v3H0zM4 8h3v3H4zM8 8h3v3H8z" />
          </svg>
          <svg width="11" height="11" viewBox="0 0 11 11" fill="#b4b4b4">
            <path d="M0 0h11v6H0zM0 7.500h3v3.500H0zM4 7.500h3v3.500H4zM8 7.500h3v3.500H8z" />
          </svg>
          <svg width="11" height="11" viewBox="0 0 11 11" fill="#555">
            <path d="M0 0h11v11H0z" />
          </svg>
        </div>
      </footer>

      <Watermark />
    </div>
  );
}
